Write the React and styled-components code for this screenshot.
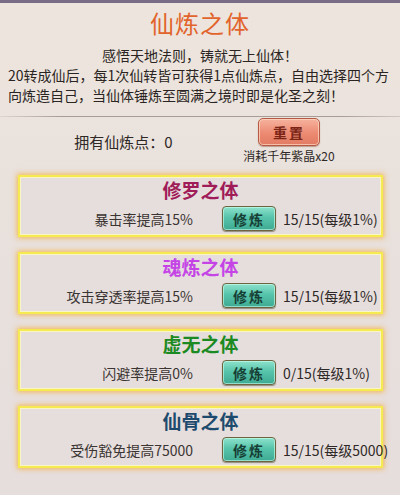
import React from 'react';
import styled, { createGlobalStyle } from 'styled-components';

const GlobalStyle = createGlobalStyle`
  html, body {
    margin: 0;
    padding: 0;
    width: 400px;
    height: 495px;
    overflow: hidden;
    background: #e8e0dc;
  }
  * {
    box-sizing: border-box;
  }
`;

const bodies = [
  { name: '修罗之体', color: '#a01c58', effect: '暴击率提高15%', progress: '15/15(每级1%)' },
  { name: '魂炼之体', color: '#c444e6', effect: '攻击穿透率提高15%', progress: '15/15(每级1%)' },
  { name: '虚无之体', color: '#1c8a22', effect: '闪避率提高0%', progress: '0/15(每级1%)' },
  { name: '仙骨之体', color: '#1e4a6e', effect: '受伤豁免提高75000', progress: '15/15(每级5000)' },
];

export default function App() {
  return (
    <>
      <GlobalStyle />
      <Panel>
        <TopBar />
        <Title>仙炼之体</Title>
        <Intro>
          <IntroHead>感悟天地法则，铸就无上仙体！</IntroHead>
          20转成仙后，每1次仙转皆可获得1点仙炼点，自由选择四个方向炼造自己，当仙体锤炼至圆满之境时即是化圣之刻！
        </Intro>
        <Divider />
        <PointsRow>
          <PointsText>拥有仙炼点：0</PointsText>
          <ResetBlock>
            <ResetButton>重置</ResetButton>
            <CostText>消耗千年紫晶x20</CostText>
          </ResetBlock>
        </PointsRow>
        <CardList>
          {bodies.map((b) => (
            <Card key={b.name}>
              <CardTitle $color={b.color}>{b.name}</CardTitle>
              <CardRow>
                <Effect>{b.effect}</Effect>
                <TrainButton>修炼</TrainButton>
                <Progress>{b.progress}</Progress>
              </CardRow>
            </Card>
          ))}
        </CardList>
      </Panel>
    </>
  );
}

const font = `"Noto Sans CJK SC", "Noto Sans", sans-serif`;

const Panel = styled.div`
  width: 400px;
  height: 495px;
  display: flex;
  flex-direction: column;
  background: linear-gradient(180deg, #ede5dd 0%, #e9e1dc 40%, #e6dedd 100%);
  font-family: ${font};
`;

const TopBar = styled.div`
  height: 3px;
  background: #786c86;
  flex-shrink: 0;
`;

const Title = styled.div`
  height: 40px;
  line-height: 40px;
  text-align: center;
  font-size: 24px;
  color: #e2642c;
  letter-spacing: 1px;
`;

const Intro = styled.div`
  padding: 2px 8px 0 8px;
  font-size: 14px;
  line-height: 20px;
  color: #2a2422;
  text-align: left;
`;

const IntroHead = styled.div`
  text-align: center;
`;

const Divider = styled.div`
  height: 1px;
  margin-top: 11px;
  background: linear-gradient(90deg, rgba(170, 160, 158, 0.2) 0%, #a89c98 15%, #a89c98 85%, rgba(170, 160, 158, 0.4) 100%);
`;

const PointsRow = styled.div`
  display: flex;
  align-items: flex-start;
  padding-left: 23px;
  height: 58px;
`;

const PointsText = styled.div`
  width: 201px;
  margin-top: 15px;
  text-align: center;
  font-size: 15px;
  line-height: 20px;
  color: #2e2826;
`;

const ResetBlock = styled.div`
  width: 130px;
  display: flex;
  flex-direction: column;
  align-items: center;
  padding-top: 1px;
`;

const ResetButton = styled.div`
  width: 62px;
  height: 28px;
  display: flex;
  align-items: center;
  justify-content: center;
  border: 1px solid #b45a44;
  border-radius: 5px;
  background: linear-gradient(180deg, #f6b29e 0%, #ec8a72 55%, #e27a62 100%);
  box-shadow: inset 0 0 0 1px rgba(255, 220, 200, 0.7), 0 1px 1px rgba(120, 50, 30, 0.4);
  font-size: 14px;
  font-weight: bold;
  color: #7a2416;
  letter-spacing: 2px;
`;

const CostText = styled.div`
  margin-top: 3px;
  font-size: 12px;
  line-height: 14px;
  color: #2e2826;
`;

const CardList = styled.div`
  display: flex;
  flex-direction: column;
  gap: 15px;
  padding: 0 17px 0 18px;
`;

const Card = styled.div`
  height: 62px;
  border: 2px solid #f6ea52;
  background: #e6dedd;
  box-shadow: 0 0 5px 1px rgba(245, 170, 40, 0.75), inset 0 0 0 1px rgba(255, 250, 190, 0.8);
  padding-top: 1px;
`;

const CardTitle = styled.div`
  height: 24px;
  line-height: 24px;
  text-align: center;
  font-size: 19px;
  font-weight: bold;
  color: ${(p) => p.$color};
`;

const CardRow = styled.div`
  display: flex;
  align-items: center;
  margin-top: 4px;
`;

const Effect = styled.div`
  width: 173px;
  flex-shrink: 0;
  text-align: right;
  font-size: 14px;
  color: #3a3432;
  white-space: nowrap;
`;

const TrainButton = styled.div`
  width: 54px;
  height: 25px;
  flex-shrink: 0;
  margin-left: 29px;
  display: flex;
  align-items: center;
  justify-content: center;
  border: 1px solid #6e6440;
  border-radius: 4px;
  background: linear-gradient(180deg, #8ee2cc 0%, #56c4aa 45%, #3eaa92 100%);
  box-shadow: inset 0 0 0 1px rgba(200, 255, 240, 0.6), 0 1px 1px rgba(60, 60, 30, 0.5);
  font-size: 14px;
  font-weight: bold;
  color: #163e34;
  letter-spacing: 2px;
`;

const Progress = styled.div`
  margin-left: 7px;
  flex-shrink: 0;
  font-size: 14px;
  color: #2e2826;
  white-space: nowrap;
`;
